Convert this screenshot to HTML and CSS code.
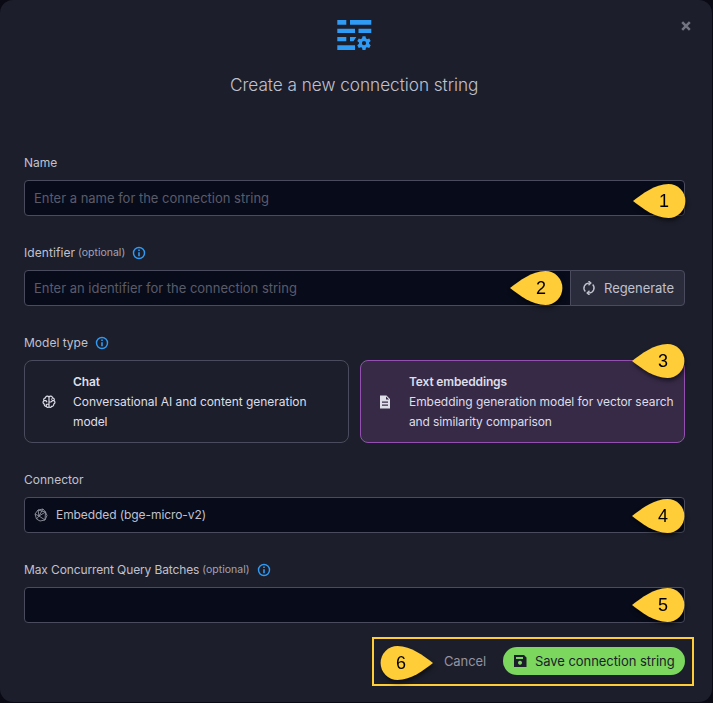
FILE: index.html
```html
<!DOCTYPE html>
<html lang="en">
<head>
<meta charset="utf-8">
<title>Create a new connection string</title>
<link rel="stylesheet" href="styles.css">
</head>
<body>
<svg class="defs" aria-hidden="true">
  <symbol id="info" viewBox="0 0 14 14"><circle cx="7" cy="7" r="5.500" fill="none" stroke="currentColor" stroke-width="1.400"/><path d="M6.200 6.200h1.600v4H6.200zM6.200 3.600h1.600v1.500H6.200z" fill="currentColor"/></symbol>
  <symbol id="pin" viewBox="0 0 53 34"><path d="M0 17C9 10 22 0 35.500 0A16.900 17 0 0 1 35.500 34C22 34 9 24 0 17Z" fill="#ffcd38"/></symbol>
</svg>
<main class="modal">
  <button class="close" aria-label="Close"><svg viewBox="0 0 10 10"><path d="M1.200 1.200l7.600 7.600M8.800 1.200L1.200 8.800" stroke="currentColor" stroke-width="2.500"/></svg></button>
  <header class="head">
    <svg class="hero" viewBox="0 0 36 32" fill="#2f9bf5"><path d="M.3 0h9v4.700h-9zM13 0h21.300v4.700H13zM.3 8.700H18V13H.3zM21.500 8.700h12.800V13H21.500zM.3 17h9v4.200h-9zM13 17h6.300l-2.800 4.200H13zM.3 25.200H18V30H.3z"/><g transform="translate(27 23.200)"><circle r="3.600" fill="none" stroke="#2f9bf5" stroke-width="3"/><path id="tooth" d="M-1.500-6.900h3l.6 3h-4.200zM-1.500 6.900h3l.6-3h-4.200z"/><use href="#tooth" transform="rotate(60)"/><use href="#tooth" transform="rotate(120)"/></g></svg>
    <h1>Create a new connection string</h1>
  </header>
  <form class="form">
    <section class="field">
      <label><span>Name</span></label>
      <div class="input placeholder"><span>Enter a name for the connection string</span></div>
    </section>
    <section class="field">
      <label><span class="loose">Identifier</span><small>(optional)</small><svg class="info"><use href="#info"/></svg></label>
      <div class="group">
        <div class="input placeholder"><span>Enter an identifier for the connection string</span></div>
        <button type="button" class="regen"><svg viewBox="0 0 14 14" fill="none" stroke="currentColor" stroke-width="1.400"><path d="M3.300 10.500A5 5 0 0 1 7 2.100h1M10.700 3.500A5 5 0 0 1 7 11.900H6"/><path d="M6.500 0l2.300 2.100-2.300 2.100M7.500 9.800L5.200 11.900 7.500 14"/></svg><span>Regenerate</span></button>
      </div>
    </section>
    <section class="field types">
      <label><span>Model type</span><svg class="info"><use href="#info"/></svg></label>
      <div class="cards">
        <div class="card"><svg viewBox="0 0 14 14" fill="none" stroke="currentColor" stroke-width="1.200"><path d="M7 2.200C6 .5 3.700 1 3.500 2.800 1.700 3 1.300 4.700 2 5.700.6 6.600.8 8.600 2.200 9c-.1 1.700 1 2.500 2.200 2.300C5 13 6.700 12.700 7 11.600 7.300 12.700 9 13 9.600 11.300c1.200.2 2.300-.6 2.200-2.300 1.400-.4 1.600-2.400.2-3.300.7-1 .3-2.700-1.500-2.900C10.300 1 8 .5 7 2.200v9.400M2 5.700h2l1 1.500M12 5.700h-1.500L9 7H7M4.300 11V9.500L7 9M9.700 3.500v1.300"/></svg>
          <div><b>Chat</b><br><span>Conversational AI and content generation</span><br><span class="tight">model</span></div></div>
        <div class="card selected"><svg viewBox="0 0 14 14" fill="currentColor"><path fill-rule="evenodd" d="M2 .5h6.500L12 4v9.500H2zM8 1.500v3h3zM4 6.500v1.200h6V6.500zM4 9.500v1.200h6V9.500z"/></svg>
          <div><b>Text embeddings</b><br><span class="snug">Embedding generation model for vector search</span><br><span class="tight">and similarity comparison</span></div></div>
      </div>
    </section>
    <section class="field">
      <label><span>Connector</span></label>
      <div class="input select"><svg viewBox="0 0 14 14" fill="none" stroke="currentColor" stroke-width=".9"><path d="M4 2l5-1 2.500 3L13 7.500 11 12l-5 1-3.500-2L1 6zM4 2l7.500 2L11 12M4 2l1 6 6 4M1 6l4 2 6.500-4M2.500 11L5 8l4-7"/></svg><span>Embedded (bge-micro-v2)</span></div>
    </section>
    <section class="field last">
      <label><span class="tight">Max Concurrent Query Batches</span><small>(optional)</small><svg class="info"><use href="#info"/></svg></label>
      <div class="input"></div>
    </section>
  </form>
  <footer class="actions">
    <button class="cancel">Cancel</button>
    <button class="save"><svg viewBox="0 0 14 14"><path fill-rule="evenodd" fill="currentColor" d="M1 1h10l2.500 2.500V13H1zM3 3v2h7V3zM7 6.800a2 2 0 1 0 .01 0z"/></svg><span>Save connection string</span></button>
  </footer>
</main>
<div class="highlight"></div>
<div class="marker m1"><svg><use href="#pin"/></svg><span>1</span></div>
<div class="marker m2"><svg><use href="#pin"/></svg><span>2</span></div>
<div class="marker m3"><svg><use href="#pin"/></svg><span>3</span></div>
<div class="marker m4"><svg><use href="#pin"/></svg><span>4</span></div>
<div class="marker m5"><svg><use href="#pin"/></svg><span>5</span></div>
<div class="marker m6"><svg><use href="#pin"/></svg><span>6</span></div>
</body>
</html>
```
FILE: styles.css
```css
* { box-sizing: border-box; }
body { margin: 0; width: 713px; height: 703px; overflow: hidden; position: relative; background: #090a13; font: 13px/20px Inter, "Liberation Sans", sans-serif; color: #c0c1ce; }
button { font: inherit; color: inherit; border: 0; background: none; padding: 0; margin: 0; }
span, small, b { white-space: nowrap; }
svg { display: block; flex: none; }
.defs { position: absolute; width: 0; height: 0; }
.modal { position: relative; width: 712px; height: 702px; background: #1c1e2b; border-radius: 13px; padding: 20px 27px 0 24px; }
.close { position: absolute; left: 681px; top: 21px; width: 10px; height: 10px; color: #737482; }
.close svg { width: 10px; height: 10px; }
.head { height: 133px; }
.hero { width: 36px; height: 32px; margin-left: 313px; }
h1 { margin: 19px 0 0 206px; font-size: 17.200px; line-height: 28px; font-weight: 300; letter-spacing: -.03px; color: #c0c1ce; }
.form { display: flex; flex-direction: column; }
.field { height: 90px; }
.field label { display: flex; align-items: center; height: 20px; margin-bottom: 7px; font-size: 12px; }
.types { height: 137px; }
.last { height: 87px; }
.loose { letter-spacing: .07px; }
.snug { letter-spacing: -.055px; }
.tight { letter-spacing: -.12px; }
small { font-size: 10.500px; margin-left: 3px; color: #a3a4b3; }
.info { width: 14px; height: 14px; margin-left: 7px; color: #2f9bf5; }
.input { height: 36px; width: 661px; border: 1px solid #4a4b5c; border-radius: 4px; background: #080b1a; padding: 0 9px; display: flex; align-items: center; }
.placeholder { color: #5a5b69; letter-spacing: -.01px; }
.group { display: flex; width: 661px; }
.group .input { width: 547px; border-radius: 4px 0 0 4px; }
.regen { width: 115px; margin-left: -1px; height: 36px; border: 1px solid #4a4b5c; border-radius: 0 4px 4px 0; background: #2b2c3b; display: flex; align-items: center; padding-left: 11px; gap: 8px; letter-spacing: -.05px; }
.regen svg, .card svg, .select svg, .save svg { width: 14px; height: 14px; }
.cards { display: flex; gap: 11px; }
.card { width: 325px; height: 83px; border: 1px solid #4a4b5c; border-radius: 8px; display: flex; align-items: center; gap: 17px; padding-left: 17px; font-size: 12px; color: #dddee8; }
.card span:not(.snug):not(.tight) { letter-spacing: -.03px; }
.selected { background: #372a47; border-color: #9350b0; }
b { font-weight: 600; letter-spacing: -.15px; }
.select { gap: 8px; font-size: 12px; letter-spacing: -.08px; }
.select svg { color: #92939f; }
.actions { display: flex; justify-content: flex-end; gap: 17px; align-items: center; height: 28px; }
.cancel { color: #9293a2; letter-spacing: -.1px; }
.save { width: 182px; height: 28px; border-radius: 14px; background: #7bd75d; color: #1c1e2b; display: flex; align-items: center; gap: 8px; padding-left: 10px; letter-spacing: -.06px; }
.highlight { position: absolute; left: 372px; top: 637px; width: 322px; height: 49px; border: 2px solid #ffcd38; }
.marker { position: absolute; width: 53px; height: 34px; filter: drop-shadow(1px 3px 2px rgba(0,0,0,.5)); color: #000; font: 18px/34px "Liberation Sans", sans-serif; }
.marker svg { width: 53px; height: 34px; }
.marker span { position: absolute; left: 26px; top: 0; }
.m1 { left: 633px; top: 184px; }
.m2 { left: 510px; top: 271px; }
.m3 { left: 632px; top: 344px; }
.m4 { left: 632px; top: 499px; }
.m5 { left: 632px; top: 588px; }
.m6 { left: 380px; top: 646px; }
.m6 svg { transform: scaleX(-1); }
.m6 span { left: 16px; }
```
